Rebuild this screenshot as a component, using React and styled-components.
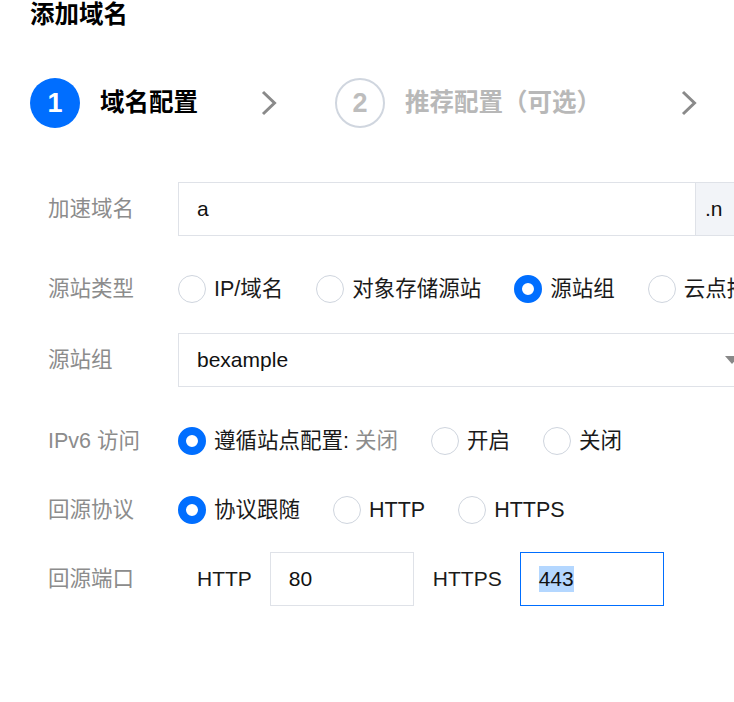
import React from "react";
import styled, { createGlobalStyle } from "styled-components";

const Global = createGlobalStyle`
  html, body { margin: 0; padding: 0; background: #fff; overflow: hidden; }
  body { font-family: "Liberation Sans", "Noto Sans CJK SC", sans-serif; }
  #root { width: 734px; height: 702px; overflow: hidden; }
`;

const Page = styled.div`
  width: 900px;
  padding: 0 0 0 30px;
  color: #1a1a1a;
`;

const Title = styled.h1`
  margin: 0;
  font-size: 24.5px;
  line-height: 30px;
  font-weight: 700;
  color: #000;
`;

const Steps = styled.div`
  display: flex;
  align-items: center;
  margin-top: 48px;
  height: 50px;
`;

const StepCircle = styled.div`
  width: 50px;
  height: 50px;
  box-sizing: border-box;
  border-radius: 50%;
  display: flex;
  align-items: center;
  justify-content: center;
  font-size: 27px;
  font-weight: 700;
  background: ${(p) => (p.$active ? "#006eff" : "#fff")};
  color: ${(p) => (p.$active ? "#fff" : "#bdbdbd")};
  border: ${(p) => (p.$active ? "none" : "2px solid #d0d6df")};
  flex: none;
`;

const StepLabel = styled.div`
  margin-left: 20px;
  font-size: 24.5px;
  line-height: 30px;
  font-weight: 700;
  color: ${(p) => (p.$active ? "#000" : "#b8b8b8")};
  white-space: nowrap;
`;

const Chevron = styled.svg`
  margin-left: ${(p) => p.$ml}px;
  margin-right: ${(p) => p.$mr || 0}px;
  flex: none;
`;

const Form = styled.div`
  display: flex;
  flex-direction: column;
  margin-top: 54px;
  padding-left: 18px;
`;

const Row = styled.div`
  display: flex;
  align-items: center;
  height: 54px;
  margin-top: ${(p) => p.$mt || 0}px;
`;

const Label = styled.div`
  width: 130px;
  flex: none;
  font-size: 21.5px;
  line-height: 30px;
  color: #8c8c8c;
`;

const Content = styled.div`
  display: flex;
  align-items: center;
  height: 100%;
`;

const InputGroup = styled.div`
  display: flex;
  height: 54px;
`;

const Box = styled.div`
  box-sizing: border-box;
  height: 54px;
  width: ${(p) => p.$w}px;
  border: 1px solid ${(p) => (p.$focus ? "#006eff" : "#dfe2e8")};
  background: #fff;
  display: flex;
  align-items: center;
  padding: 0 18px;
  font-size: 21px;
  color: #111;
  position: relative;
  flex: none;
`;

const Addon = styled.div`
  box-sizing: border-box;
  height: 54px;
  width: 140px;
  border: 1px solid #dfe2e8;
  border-left: 1px solid #d5d9e0;
  margin-left: -1px;
  background: #f2f4f8;
  display: flex;
  align-items: center;
  padding-left: 9px;
  font-size: 21px;
  color: #111;
  white-space: nowrap;
  flex: none;
`;

const Caret = styled.div`
  position: absolute;
  left: 546px;
  top: 50%;
  margin-top: -4px;
  width: 0;
  height: 0;
  border-left: 7px solid transparent;
  border-right: 7px solid transparent;
  border-top: 8px solid #888;
`;

const RadioGroup = styled.div`
  display: flex;
  align-items: center;
`;

const RadioItem = styled.label`
  display: flex;
  align-items: center;
  margin-right: 33px;
  font-size: 21.5px;
  line-height: 30px;
  color: #1a1a1a;
  white-space: nowrap;
`;

const RadioDot = styled.span`
  width: 28px;
  height: 28px;
  box-sizing: border-box;
  border-radius: 50%;
  border: ${(p) => (p.$checked ? "8.5px solid #006eff" : "1px solid #cfd5de")};
  background: #fff;
  margin-right: 8px;
  flex: none;
`;

const Muted = styled.span`
  color: #8c8c8c;
`;

const PortLabel = styled.span`
  padding: 0 18px 0 19px;
  font-size: 21px;
  line-height: 30px;
  color: #1a1a1a;
`;

const Selected = styled.span`
  display: inline-block;
  background: #b4d7ff;
  line-height: 26px;
  height: 26px;
`;

function Radio({ checked, children }) {
  return (
    <RadioItem>
      <RadioDot $checked={checked} />
      <span>{children}</span>
    </RadioItem>
  );
}

function ChevronIcon({ ml, mr }) {
  return (
    <Chevron $ml={ml} $mr={mr} width="16" height="26" viewBox="0 0 16 26">
      <polyline
        points="2,2 13.5,13 2,24"
        fill="none"
        stroke="#8a8a8a"
        strokeWidth="3"
      />
    </Chevron>
  );
}

export default function App() {
  return (
    <>
      <Global />
      <Page>
        <Title>添加域名</Title>
        <Steps>
          <StepCircle $active>1</StepCircle>
          <StepLabel $active>域名配置</StepLabel>
          <ChevronIcon ml={63} mr={58} />
          <StepCircle>2</StepCircle>
          <StepLabel>推荐配置（可选）</StepLabel>
          <ChevronIcon ml={80} />
        </Steps>
        <Form>
          <Row>
            <Label>加速域名</Label>
            <Content>
              <InputGroup>
                <Box $w={518}>a</Box>
                <Addon>.n</Addon>
              </InputGroup>
            </Content>
          </Row>
          <Row $mt={26}>
            <Label>源站类型</Label>
            <RadioGroup>
              <Radio>IP/域名</Radio>
              <Radio>对象存储源站</Radio>
              <Radio checked>源站组</Radio>
              <Radio>云点播</Radio>
            </RadioGroup>
          </Row>
          <Row $mt={17}>
            <Label>源站组</Label>
            <Content>
              <Box $w={580}>
                bexample
                <Caret />
              </Box>
            </Content>
          </Row>
          <Row $mt={27}>
            <Label>IPv6 访问</Label>
            <RadioGroup>
              <Radio checked>
                遵循站点配置: <Muted>关闭</Muted>
              </Radio>
              <Radio>开启</Radio>
              <Radio>关闭</Radio>
            </RadioGroup>
          </Row>
          <Row $mt={15}>
            <Label>回源协议</Label>
            <RadioGroup>
              <Radio checked>协议跟随</Radio>
              <Radio>HTTP</Radio>
              <Radio>HTTPS</Radio>
            </RadioGroup>
          </Row>
          <Row $mt={15}>
            <Label>回源端口</Label>
            <Content>
              <PortLabel>HTTP</PortLabel>
              <Box $w={144}>80</Box>
              <PortLabel>HTTPS</PortLabel>
              <Box $w={144} $focus>
                <Selected>443</Selected>
              </Box>
            </Content>
          </Row>
        </Form>
      </Page>
    </>
  );
}
